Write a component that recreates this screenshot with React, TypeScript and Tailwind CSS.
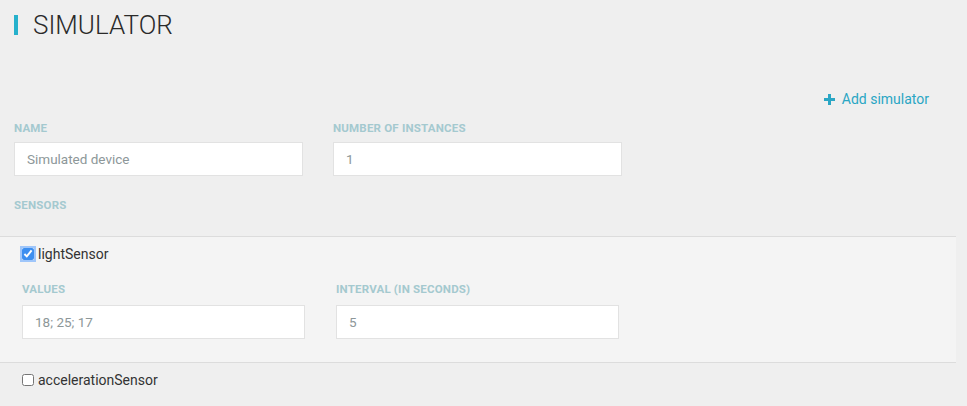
import React from 'react';

const label = "block text-[11.5px] font-bold uppercase tracking-[0.2px] text-[#a4c9cf] leading-[11px]";
const input =
  "block h-[34px] w-full bg-white border border-[#e2e2e2] px-[12px] text-[13.5px] text-[#8d9799] outline-none";

function Field({ name, value, gap }: { name: string; value: string; gap: string }) {
  return (
    <div className="flex flex-col">
      <span className={label}>{name}</span>
      <input className={`${input} ${gap}`} defaultValue={value} readOnly />
    </div>
  );
}

function SensorRow({ name, checked, focused }: { name: string; checked?: boolean; focused?: boolean }) {
  return (
    <label className="flex items-center gap-[4px] h-[14px]">
      <input
        type="checkbox"
        defaultChecked={checked}
        className={`m-0 w-[12px] h-[12px] accent-[#3d8ff0] ${focused ? 'rounded-[3px] shadow-[0_0_0_2px_rgba(90,160,255,0.55)]' : ''}`}
      />
      <span className="text-[14px] leading-[14px] text-[#333]">{name}</span>
    </label>
  );
}

export default function App() {
  return (
    <div className="min-h-screen bg-[#efefef] font-['Roboto','Liberation_Sans',sans-serif]">
      <div className="pt-[12px] pl-[14px] flex items-center gap-[15px] h-[38px]">
        <span className="w-[4px] h-[20px] bg-[#26b1cc]" />
        <h1 className="text-[26px] font-light text-[#2a2a2a] leading-none">SIMULATOR</h1>
      </div>

      <div className="flex justify-end pr-[38px] mt-[51px]">
        <button className="flex items-center gap-[7px] text-[14px] leading-[20px] text-[#2aa6c4]">
          <svg width="11" height="11" viewBox="0 0 11 11">
            <path d="M4 0h3v4h4v3H7v4H4V7H0V4h4z" fill="#2aa6c4" />
          </svg>
          Add simulator
        </button>
      </div>

      <div className="grid grid-cols-[289px_289px] gap-x-[30px] pl-[14px] mt-[14px]">
        <Field name="Name" value="Simulated device" gap="mt-[8px]" />
        <Field name="Number of instances" value="1" gap="mt-[8px]" />
      </div>

      <div className="pl-[14px] mt-[24px]">
        <span className={label}>Sensors</span>
      </div>

      <div className="mt-[25px] w-[956px] bg-[#f4f4f4] border-y border-[#dcdcdc]">
        <div className="pl-[22px] pt-[10px]">
          <SensorRow name="lightSensor" checked focused />
        </div>
        <div className="grid grid-cols-[283px_283px] gap-x-[31px] pl-[22px] pt-[23px] pb-[23px]">
          <Field name="Values" value="18; 25; 17" gap="mt-[10px]" />
          <Field name="Interval (in seconds)" value="5" gap="mt-[10px]" />
        </div>
      </div>

      <div className="pl-[22px] pt-[10px]">
        <SensorRow name="accelerationSensor" />
      </div>
    </div>
  );
}
